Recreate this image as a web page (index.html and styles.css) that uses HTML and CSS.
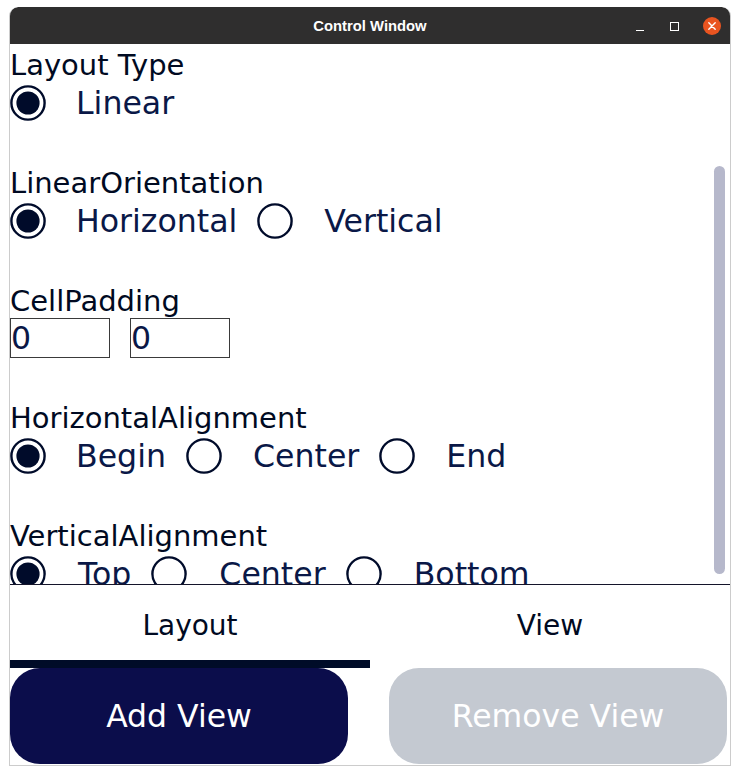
FILE: index.html
```html
<!DOCTYPE html>
<html>
<head>
<meta charset="utf-8">
<link rel="stylesheet" href="styles.css">
</head>
<body>
<div class="window">
  <div class="titlebar">
    <span class="title">Control Window</span>
    <div class="controls">
      <span class="ctl-min"></span>
      <span class="ctl-max"></span>
      <span class="ctl-close">
        <svg width="18" height="18" viewBox="0 0 18 18"><circle cx="9" cy="9" r="9" fill="#e95420"/><path d="M5.8 5.8 L12.2 12.2 M12.2 5.8 L5.8 12.2" stroke="#fff" stroke-width="1.4" stroke-linecap="round"/></svg>
      </span>
    </div>
  </div>
  <div class="content">
    <section class="group">
      <div class="label">Layout Type</div>
      <div class="row">
        <div class="opt"><svg class="radio" viewBox="0 0 36 36"><circle cx="18" cy="18" r="16.6" fill="none" stroke="#000b2a" stroke-width="2.4"/><circle cx="18" cy="18" r="11.6" fill="#000b2a"/></svg><span>Linear</span></div>
      </div>
    </section>
    <section class="group">
      <div class="label">LinearOrientation</div>
      <div class="row">
        <div class="opt"><svg class="radio" viewBox="0 0 36 36"><circle cx="18" cy="18" r="16.6" fill="none" stroke="#000b2a" stroke-width="2.4"/><circle cx="18" cy="18" r="11.6" fill="#000b2a"/></svg><span>Horizontal</span></div>
        <div class="opt"><svg class="radio" viewBox="0 0 36 36"><circle cx="18" cy="18" r="16.6" fill="none" stroke="#000b2a" stroke-width="2.4"/></svg><span>Vertical</span></div>
      </div>
    </section>
    <section class="group">
      <div class="label">CellPadding</div>
      <div class="inputs">
        <div class="field">0</div>
        <div class="field">0</div>
      </div>
    </section>
    <section class="group">
      <div class="label">HorizontalAlignment</div>
      <div class="row">
        <div class="opt"><svg class="radio" viewBox="0 0 36 36"><circle cx="18" cy="18" r="16.6" fill="none" stroke="#000b2a" stroke-width="2.4"/><circle cx="18" cy="18" r="11.6" fill="#000b2a"/></svg><span>Begin</span></div>
        <div class="opt"><svg class="radio" viewBox="0 0 36 36"><circle cx="18" cy="18" r="16.6" fill="none" stroke="#000b2a" stroke-width="2.4"/></svg><span>Center</span></div>
        <div class="opt"><svg class="radio" viewBox="0 0 36 36"><circle cx="18" cy="18" r="16.6" fill="none" stroke="#000b2a" stroke-width="2.4"/></svg><span>End</span></div>
      </div>
    </section>
    <section class="group">
      <div class="label">VerticalAlignment</div>
      <div class="row row-wide">
        <div class="opt"><svg class="radio" viewBox="0 0 36 36"><circle cx="18" cy="18" r="16.6" fill="none" stroke="#000b2a" stroke-width="2.4"/><circle cx="18" cy="18" r="11.6" fill="#000b2a"/></svg><span>Top</span></div>
        <div class="opt"><svg class="radio" viewBox="0 0 36 36"><circle cx="18" cy="18" r="16.6" fill="none" stroke="#000b2a" stroke-width="2.4"/></svg><span>Center</span></div>
        <div class="opt"><svg class="radio" viewBox="0 0 36 36"><circle cx="18" cy="18" r="16.6" fill="none" stroke="#000b2a" stroke-width="2.4"/></svg><span>Bottom</span></div>
      </div>
    </section>
    <div class="scrollbar"></div>
  </div>
  <div class="tabs">
    <div class="tab active"><span>Layout</span></div>
    <div class="tab"><span>View</span></div>
  </div>
  <div class="buttons">
    <button class="btn btn-primary">Add View</button>
    <button class="btn btn-disabled">Remove View</button>
  </div>
</div>
</body>
</html>
```
FILE: styles.css
```css
html, body {
  margin: 0;
  padding: 0;
  background: #ffffff;
}
body {
  font-family: "DejaVu Sans", sans-serif;
  padding: 7px 0 0 9px;
}
.window {
  width: 720px;
  height: 758px;
  border: 1px solid #cccccc;
  border-top: 0;
  border-radius: 9px 9px 0 0;
  overflow: hidden;
  display: flex;
  flex-direction: column;
  background: #ffffff;
}
.titlebar {
  height: 37px;
  flex: none;
  background: #2f2e2e;
  display: flex;
  align-items: center;
  justify-content: center;
  position: relative;
  margin: 0 -1px;
  border-radius: 9px 9px 0 0;
}
.title {
  font-family: "Liberation Sans", sans-serif;
  font-weight: bold;
  font-size: 14.8px;
  color: #ffffff;
  margin-top: 1px;
}
.controls {
  position: absolute;
  right: 10px;
  top: 10px;
  display: flex;
  align-items: center;
  gap: 0;
}
.ctl-min {
  width: 8px;
  height: 1px;
  background: #ffffff;
  margin-top: 9px;
  margin-right: 26px;
}
.ctl-max {
  width: 7px;
  height: 7px;
  border: 1px solid #ffffff;
  margin-right: 24px;
}
.ctl-close {
  width: 18px;
  height: 18px;
  display: block;
}
.ctl-close svg { display: block; }
.content {
  height: 537px;
  flex: none;
  padding-top: 3px;
  position: relative;
  overflow: hidden;
  border-bottom: 1px solid #14142a;
}
.group {
  margin-bottom: 42px;
}
.label {
  font-size: 29px;
  line-height: 36px;
  color: #000a22;
  white-space: nowrap;
}
.row {
  height: 40px;
  display: flex;
  align-items: center;
  gap: 20px;
}
.opt {
  display: flex;
  align-items: center;
  font-size: 31.6px;
  color: #0a1847;
  white-space: nowrap;
}
.radio {
  width: 36px;
  height: 36px;
  flex: none;
  display: block;
}
.opt span {
  margin-left: 30px;
}
.opt + .opt span {
  margin-left: 31px;
}
.row-wide .opt span {
  margin-left: 32px;
}
.inputs {
  display: flex;
  gap: 20px;
  height: 40px;
  margin-top: -1px;
}
.field {
  width: 98px;
  height: 38px;
  border: 1px solid #3a3a3a;
  font-size: 31.6px;
  line-height: 38px;
  color: #0a1847;
  box-sizing: content-box;
}
.scrollbar {
  position: absolute;
  left: 704px;
  top: 122px;
  width: 11px;
  height: 408px;
  border-radius: 6px;
  background: #b6b8cb;
}
.tabs {
  display: flex;
  height: 83px;
  flex: none;
}
.tab {
  width: 360px;
  display: flex;
  justify-content: center;
  align-items: center;
  font-size: 28px;
  color: #000a22;
  box-sizing: border-box;
  border-bottom: 8px solid transparent;
}
.tab span {
  margin-top: 6px;
}
.tab.active {
  border-bottom-color: #000c28;
}
.buttons {
  display: flex;
  gap: 41px;
  height: 96px;
  flex: none;
}
.btn {
  width: 338px;
  height: 96px;
  border: 0;
  border-radius: 30px;
  font-family: "DejaVu Sans", sans-serif;
  font-size: 31.5px;
  color: #ffffff;
  padding: 0;
}
.btn-primary {
  background: #0b0d4b;
}
.btn-disabled {
  background: #c4c9d1;
}
```
